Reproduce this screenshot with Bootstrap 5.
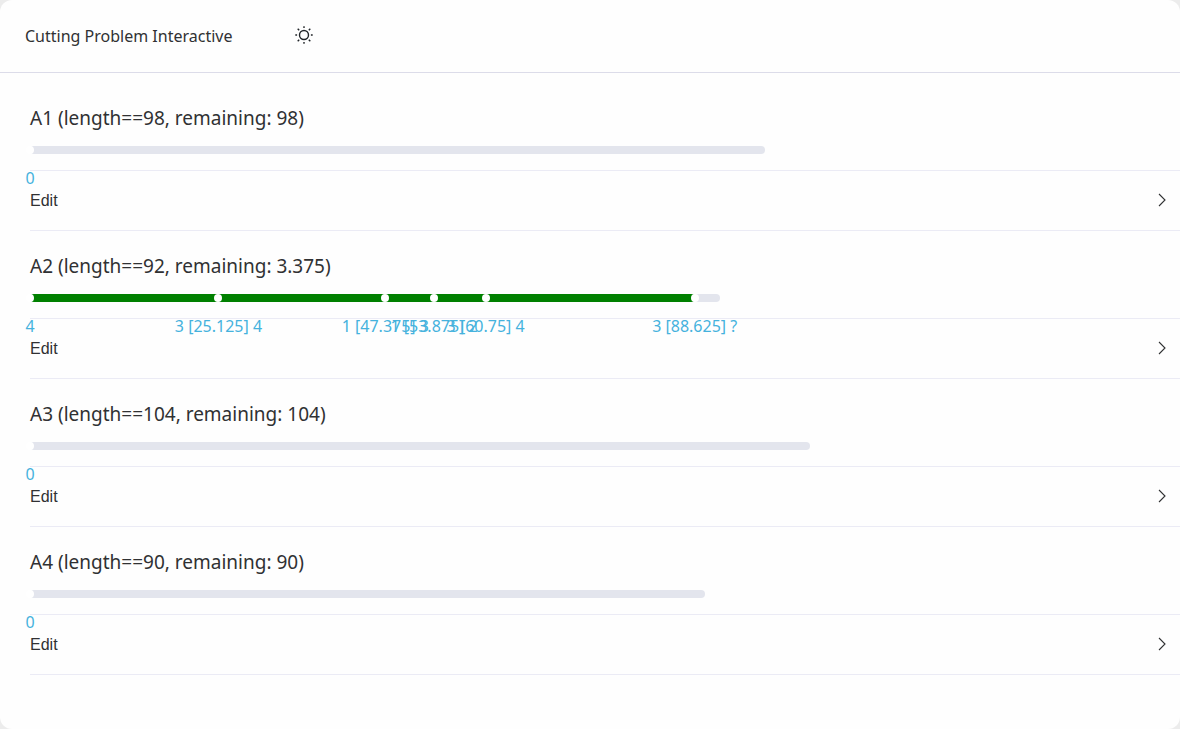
<!DOCTYPE html>
<html lang="en">
<head>
<meta charset="utf-8">
<meta name="viewport" content="width=device-width, initial-scale=1">
<title>Cutting Problem Interactive</title>
<link href="https://cdn.jsdelivr.net/npm/bootstrap@5.3.0/dist/css/bootstrap.min.css" rel="stylesheet">
<style>
  body { background: #ececec; color: #303133; font-family: "Noto Sans", "Open Sans", sans-serif; }
  .app-window { background: #fefefe; border-radius: 12px; }
  .app-header { height: 73px; padding: 0 25px; border-bottom: 1px solid #dcdce9; }
  .app-title { font-size: 16px; line-height: 24px; font-weight: 400; width: 270px; }
  .theme-btn { width: 18px; height: 20px; color: #212529; }
  .stock-list { padding: 10px 0 48px 30px; }
  .stock { padding-top: 23px; }
  .stock-title { font-size: 19px; line-height: 24px; font-weight: 400; margin: 0 0 16px; }
  /* one unit of stock length is drawn 7.5px wide */
  .stock-bar { width: calc(var(--len) * 7.5px); height: 8px; border-radius: 4px; background: #e3e5ed; margin-bottom: 16px; }
  .stock-used { width: calc(var(--used) * 7.5px); height: 8px; border-radius: 4px; background: #008000; }
  .cut { left: calc(var(--at) * 7.5px); }
  .cut-dot { width: 8px; height: 8px; border-radius: 50%; background: #fff; }
  .cut-label { top: 22px; font-size: 16px; line-height: 20px; font-weight: 400; color: #45b2dd; }
  .edit-btn { height: 61px; padding: 0 12px 0 0; border: solid #ebebf5; border-width: 1px 0; background: none; color: #303133; font: 16px/24px "Liberation Sans", Arial, sans-serif; }
</style>
</head>
<body>
<div class="app-window min-vh-100">
  <header class="app-header d-flex align-items-center">
    <h1 class="app-title mb-0">Cutting Problem Interactive</h1>
    <button type="button" class="theme-btn btn p-0 border-0 d-flex" aria-label="Toggle theme">
      <svg width="18" height="18" viewBox="0 0 18 18" fill="none" stroke="currentColor" stroke-width="1.4" aria-hidden="true">
        <circle cx="9" cy="9" r="4.5"/>
        <path d="M9 .3v1.8M9 15.9v1.8M.3 9h1.8M15.9 9h1.8M2.7 2.7l1.5 1.5M13.8 13.8l1.5 1.5M2.7 15.3l1.5-1.5M13.8 4.2l1.5-1.5"/>
      </svg>
    </button>
  </header>

  <main class="stock-list">
    <section class="stock">
      <h2 class="stock-title">A1 (length==98, remaining: 98)</h2>
      <div class="stock-bar position-relative" style="--len:98">
        <div class="cut position-absolute" style="--at:0"><div class="cut-dot position-absolute translate-middle-x"></div><div class="cut-label position-absolute translate-middle-x text-nowrap">0</div></div>
      </div>
      <button type="button" class="edit-btn d-flex align-items-center justify-content-between w-100">Edit
        <svg width="12" height="16" viewBox="0 0 12 16" fill="none" stroke="currentColor" stroke-width="1.1" aria-hidden="true"><path d="M3 1l6 6-6 6"/></svg>
      </button>
    </section>

    <section class="stock">
      <h2 class="stock-title">A2 (length==92, remaining: 3.375)</h2>
      <div class="stock-bar position-relative" style="--len:92">
        <div class="stock-used" style="--used:88.625"></div>
        <div class="cut position-absolute top-0" style="--at:0"><div class="cut-dot position-absolute translate-middle-x"></div><div class="cut-label position-absolute translate-middle-x text-nowrap">4</div></div>
        <div class="cut position-absolute top-0" style="--at:25.125"><div class="cut-dot position-absolute translate-middle-x"></div><div class="cut-label position-absolute translate-middle-x text-nowrap">3 [25.125] 4</div></div>
        <div class="cut position-absolute top-0" style="--at:47.375"><div class="cut-dot position-absolute translate-middle-x"></div><div class="cut-label position-absolute translate-middle-x text-nowrap">1 [47.375] 3</div></div>
        <div class="cut position-absolute top-0" style="--at:53.875"><div class="cut-dot position-absolute translate-middle-x"></div><div class="cut-label position-absolute translate-middle-x text-nowrap">1 [53.875] 2</div></div>
        <div class="cut position-absolute top-0" style="--at:60.75"><div class="cut-dot position-absolute translate-middle-x"></div><div class="cut-label position-absolute translate-middle-x text-nowrap">3 [60.75] 4</div></div>
        <div class="cut position-absolute top-0" style="--at:88.625"><div class="cut-dot position-absolute translate-middle-x"></div><div class="cut-label position-absolute translate-middle-x text-nowrap">3 [88.625] ?</div></div>
      </div>
      <button type="button" class="edit-btn d-flex align-items-center justify-content-between w-100">Edit
        <svg width="12" height="16" viewBox="0 0 12 16" fill="none" stroke="currentColor" stroke-width="1.1" aria-hidden="true"><path d="M3 1l6 6-6 6"/></svg>
      </button>
    </section>

    <section class="stock">
      <h2 class="stock-title">A3 (length==104, remaining: 104)</h2>
      <div class="stock-bar position-relative" style="--len:104">
        <div class="cut position-absolute" style="--at:0"><div class="cut-dot position-absolute translate-middle-x"></div><div class="cut-label position-absolute translate-middle-x text-nowrap">0</div></div>
      </div>
      <button type="button" class="edit-btn d-flex align-items-center justify-content-between w-100">Edit
        <svg width="12" height="16" viewBox="0 0 12 16" fill="none" stroke="currentColor" stroke-width="1.1" aria-hidden="true"><path d="M3 1l6 6-6 6"/></svg>
      </button>
    </section>

    <section class="stock">
      <h2 class="stock-title">A4 (length==90, remaining: 90)</h2>
      <div class="stock-bar position-relative" style="--len:90">
        <div class="cut position-absolute" style="--at:0"><div class="cut-dot position-absolute translate-middle-x"></div><div class="cut-label position-absolute translate-middle-x text-nowrap">0</div></div>
      </div>
      <button type="button" class="edit-btn d-flex align-items-center justify-content-between w-100">Edit
        <svg width="12" height="16" viewBox="0 0 12 16" fill="none" stroke="currentColor" stroke-width="1.1" aria-hidden="true"><path d="M3 1l6 6-6 6"/></svg>
      </button>
    </section>
  </main>
</div>
<script src="https://cdn.jsdelivr.net/npm/bootstrap@5.3.0/dist/js/bootstrap.bundle.min.js"></script>
</body>
</html>
